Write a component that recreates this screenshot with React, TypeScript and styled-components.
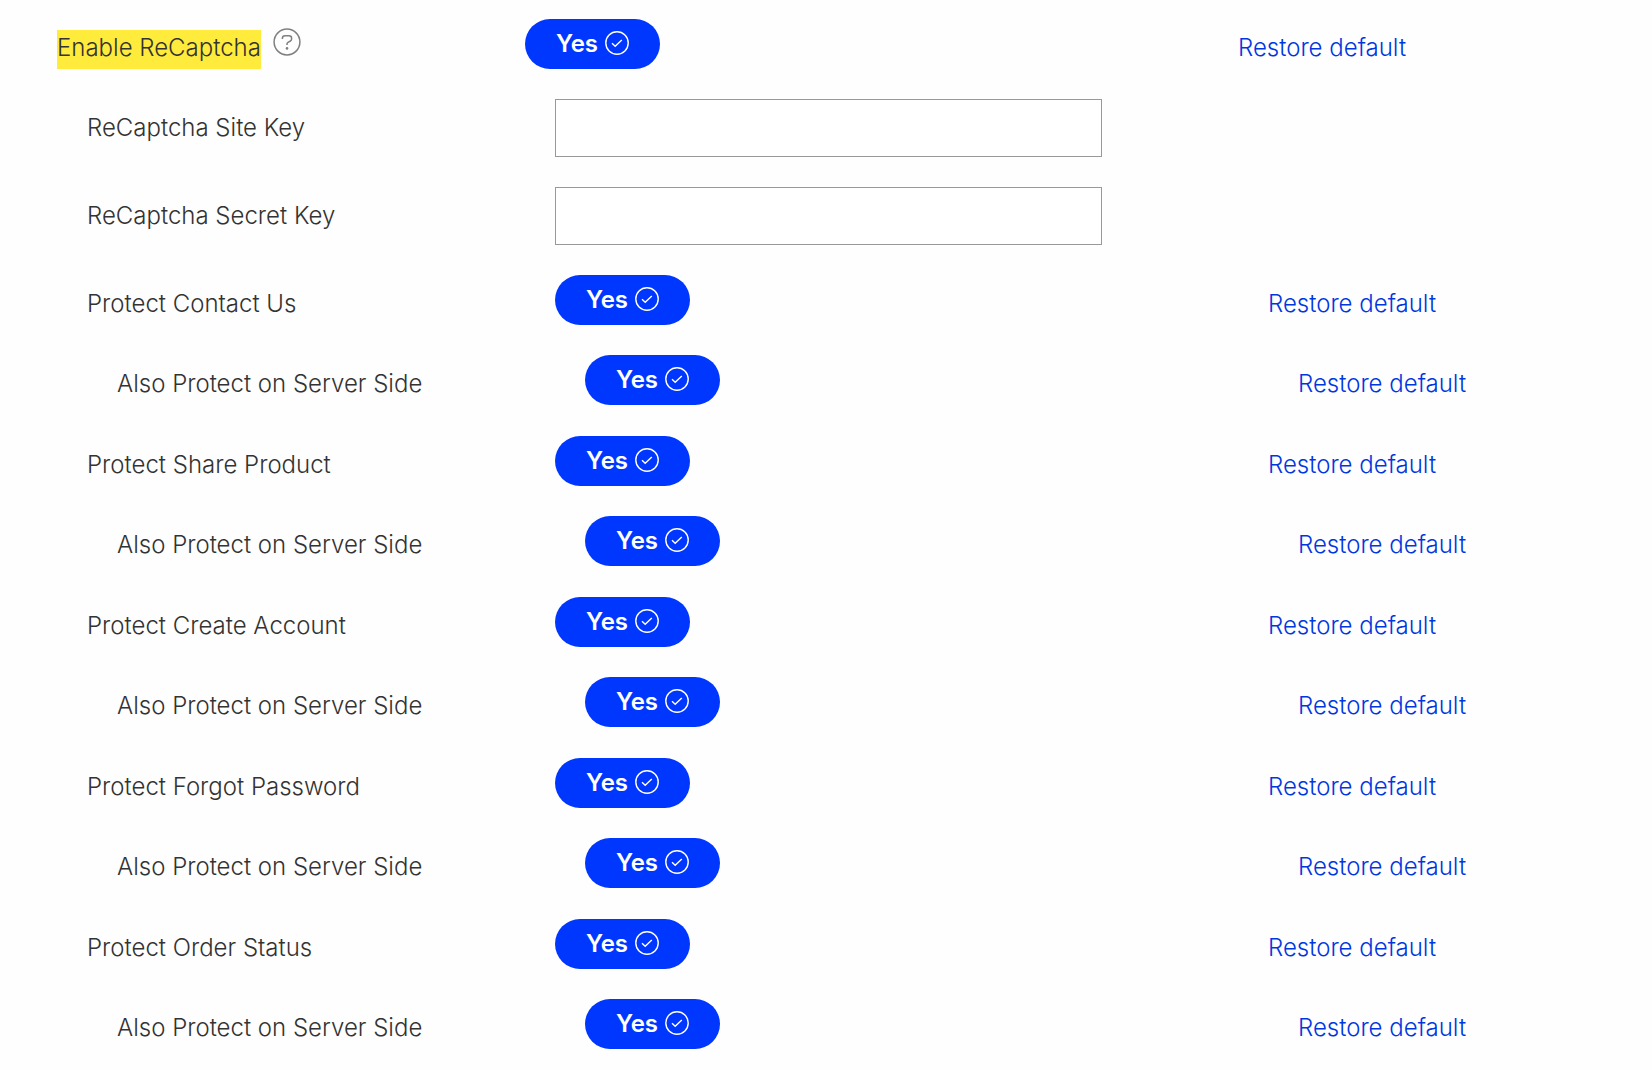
import React, { useId, useState } from "react";
import styled, { createGlobalStyle } from "styled-components";

const GlobalStyle = createGlobalStyle`
  *, *::before, *::after { box-sizing: border-box; }
  body {
    margin: 0;
    background: #fefefe;
    color: #333;
    font-family: Inter, "Liberation Sans", sans-serif;
    font-size: 24px;
    font-weight: 350;
    line-height: 35px;
  }
`;

const Page = styled.main`
  display: flex;
  flex-direction: column;
  gap: 30px;
  padding: 19px 0 19px 57px;
`;

const Group = styled.section`
  display: flex;
  flex-direction: column;
  gap: 30px;
`;

const ProtectionList = styled.div`
  display: flex;
  flex-direction: column;
  gap: 31px;
`;

const Row = styled.div`
  display: grid;
  grid-template-columns: 468fr 713fr 414fr;
`;

const Cell = styled.div<{ $level: number }>`
  min-width: 0;
  padding-left: ${({ $level }) => $level * 30}px;
`;

const LabelCell = styled(Cell)`
  display: flex;
  align-items: flex-start;
  gap: 12px;
  padding-top: 11px;
`;

const LinkCell = styled(Cell)`
  padding-top: 11px;
`;

const Label = styled.label<{ $highlighted?: boolean }>`
  padding-bottom: 4px;
  background: ${({ $highlighted }) => ($highlighted ? "#ffeb3b" : "transparent")};
`;

const Toggle = styled.button`
  display: flex;
  align-items: center;
  justify-content: center;
  gap: 7px;
  width: 135px;
  height: 50px;
  padding: 0 0 2px;
  border: 0;
  border-radius: 25px;
  background: #0037ff;
  color: #fff;
  font: inherit;
  font-weight: 600;
  cursor: pointer;
`;

const TextInput = styled.input`
  display: block;
  width: 100%;
  max-width: 547px;
  height: 58px;
  padding: 0 16px;
  border: 1px solid #999;
  border-radius: 0;
  background: #fff;
  color: inherit;
  font: inherit;
`;

const RestoreLink = styled.a`
  color: #0037e0;
  text-decoration: none;
  &:hover { text-decoration: underline; }
`;

const HelpButton = styled.button`
  display: flex;
  margin-top: -2px;
  padding: 0;
  border: 0;
  background: none;
  color: #808080;
  cursor: help;
`;

const CheckIcon = () => (
  <svg width="24" height="24" viewBox="0 0 24 24" fill="none" stroke="currentColor" strokeWidth="1.4" aria-hidden="true">
    <circle cx="12" cy="12" r="11.2" />
    <path d="M7 12.2l3.2 3.1 6.6-6.4" />
  </svg>
);

const OffIcon = () => (
  <svg width="24" height="24" viewBox="0 0 24 24" fill="none" stroke="currentColor" strokeWidth="1.4" aria-hidden="true">
    <circle cx="12" cy="12" r="11.2" />
    <path d="M8 8l8 8M16 8l-8 8" />
  </svg>
);

const HelpIcon = () => (
  <svg width="28" height="28" viewBox="0 0 28 28" fill="none" stroke="currentColor" strokeWidth="1.5" aria-hidden="true">
    <circle cx="14" cy="14" r="12.9" />
    <path d="M9.4 11V10.2Q9.4 7.8 12 7.8H16Q18.6 7.8 18.6 10.2V11Q18.6 12.3 17.4 13L15 14.3Q14 14.9 14 16.1V17" />
    <circle cx="14" cy="20.4" r="1.3" fill="currentColor" stroke="none" />
  </svg>
);

function ToggleRow({ label, level, help }: { label: string; level: number; help?: boolean }) {
  const id = useId();
  const [on, setOn] = useState(true);
  return (
    <Row>
      <LabelCell $level={level}>
        <Label htmlFor={id} $highlighted={help}>{label}</Label>
        {help && <HelpButton type="button" aria-label="Help"><HelpIcon /></HelpButton>}
      </LabelCell>
      <Cell $level={level}>
        <Toggle id={id} type="button" aria-pressed={on} onClick={() => setOn(!on)}>
          {on ? "Yes" : "No"}
          {on ? <CheckIcon /> : <OffIcon />}
        </Toggle>
      </Cell>
      <LinkCell $level={level}>
        <RestoreLink href="#" onClick={(e) => { e.preventDefault(); setOn(true); }}>Restore default</RestoreLink>
      </LinkCell>
    </Row>
  );
}

function KeyRow({ label }: { label: string }) {
  const id = useId();
  return (
    <Row>
      <LabelCell $level={1}><Label htmlFor={id}>{label}</Label></LabelCell>
      <Cell $level={1}><TextInput id={id} type="text" /></Cell>
    </Row>
  );
}

const protections = [
  "Protect Contact Us",
  "Protect Share Product",
  "Protect Create Account",
  "Protect Forgot Password",
  "Protect Order Status",
];

export default function App() {
  return (
    <>
      <GlobalStyle />
      <Page>
        <ToggleRow label="Enable ReCaptcha" level={0} help />
        <KeyRow label="ReCaptcha Site Key" />
        <KeyRow label="ReCaptcha Secret Key" />
        <ProtectionList>
          {protections.map((name) => (
            <Group key={name}>
              <ToggleRow label={name} level={1} />
              <ToggleRow label="Also Protect on Server Side" level={2} />
            </Group>
          ))}
        </ProtectionList>
      </Page>
    </>
  );
}
